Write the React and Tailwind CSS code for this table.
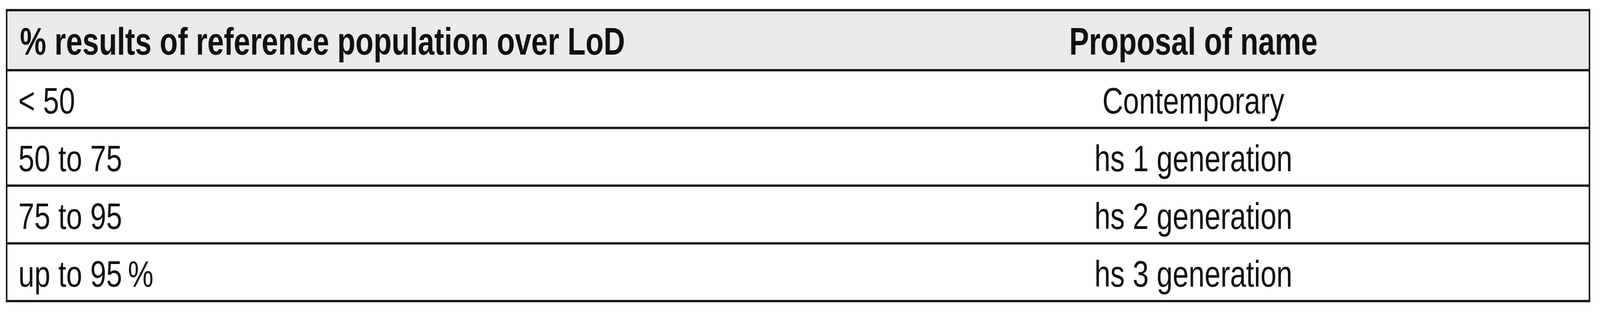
export default function App() {
  const rows = [
    ["< 50", "Contemporary"],
    ["50 to 75", "hs 1 generation"],
    ["75 to 95", "hs 2 generation"],
    ["up to 95\u2009%", "hs 3 generation"],
  ];
  return (
    <div className="w-full h-[800px] bg-white pt-[23px] pl-[15px] pr-[25px] font-['Liberation_Sans',Arial,sans-serif] text-[#111111]">
      <div className="w-full border-x-[4px] border-t-[6px] border-[#1a1a1a]">
        <div className="grid grid-cols-2 h-[154px] bg-[#ebebeb] border-b-[6px] border-[#1a1a1a] text-[98px] font-bold">
          <div className="flex items-center pl-[32px] pt-[4px] whitespace-nowrap">
            <span className="inline-block origin-left scale-x-[0.773]">
              % results of reference population over LoD
            </span>
          </div>
          <div className="flex items-center justify-center pt-[4px] whitespace-nowrap">
            <span className="inline-block origin-center scale-x-[0.773]">Proposal of name</span>
          </div>
        </div>
        {rows.map(([a, b], i) => (
          <div
            key={i}
            className="grid grid-cols-2 h-[148px] border-b-[6px] border-[#1a1a1a] text-[94px]"
          >
            <div className="flex items-center pl-[28px] pt-[5px] whitespace-nowrap">
              <span className="inline-block origin-left scale-x-[0.782]">{a}</span>
            </div>
            <div className="flex items-center justify-center pt-[5px] whitespace-nowrap">
              <span className="inline-block origin-center scale-x-[0.782]">{b}</span>
            </div>
          </div>
        ))}
      </div>
    </div>
  );
}
